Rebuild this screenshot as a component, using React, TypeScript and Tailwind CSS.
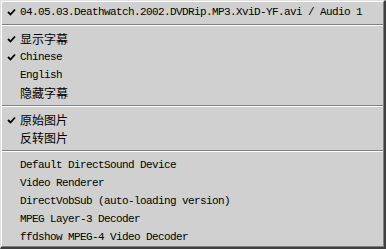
const mono = "font-['Liberation_Mono','Courier_New',monospace] text-[11px] tracking-[-0.6px]";
const cjk = "font-['Noto_Sans_CJK_SC','Noto_Sans',sans-serif] text-[12px]";

type Item = { label: string; checked?: boolean; cn?: boolean };

const groups: Item[][] = [
    [{ label: "04.05.03.Deathwatch.2002.DVDRip.MP3.XviD-YF.avi / Audio 1", checked: true }],
    [
        { label: "显示字幕", checked: true, cn: true },
        { label: "Chinese", checked: true },
        { label: "English" },
        { label: "隐藏字幕", cn: true },
    ],
    [
        { label: "原始图片", checked: true, cn: true },
        { label: "反转图片", cn: true },
    ],
    [
        { label: "Default DirectSound Device" },
        { label: "Video Renderer" },
        { label: "DirectVobSub (auto-loading version)" },
        { label: "MPEG Layer-3 Decoder" },
        { label: "ffdshow MPEG-4 Video Decoder" },
    ],
];

function Check() {
    return (
        <svg width="9" height="8" viewBox="0 0 9 8" className="block">
            <path d="M1 4 L3.5 6.5 L8 1.5" fill="none" stroke="#000" strokeWidth="1.8" />
        </svg>
    );
}

function Row({ item }: { item: Item }) {
    return (
        <div className="flex h-[18px] items-center text-black">
            <div className="flex w-[18px] justify-end pr-[4px]">{item.checked && <Check />}</div>
            <span className={`whitespace-pre leading-none ${item.cn ? cjk : mono}`}>{item.label}</span>
        </div>
    );
}

function Separator() {
    return (
        <div className="flex h-[9px] flex-col pt-[3px]">
            <div className="h-px bg-[#808080]" />
            <div className="h-px bg-white" />
        </div>
    );
}

export default function App() {
    return (
        <div className="h-[249px] w-[386px] border-r-2 border-b-2 border-t border-l border-r-[#404040] border-b-[#404040] border-t-[#e0e0e0] border-l-[#e0e0e0] bg-[#d0d0d0]">
            <div className="flex h-full flex-col border-t border-l border-r border-b border-t-white border-l-white border-r-[#808080] border-b-[#808080] pt-px">
                {groups.map((g, gi) => (
                    <div key={gi}>
                        {gi > 0 && <Separator />}
                        {g.map((item) => (
                            <Row key={item.label} item={item} />
                        ))}
                    </div>
                ))}
            </div>
        </div>
    );
}
